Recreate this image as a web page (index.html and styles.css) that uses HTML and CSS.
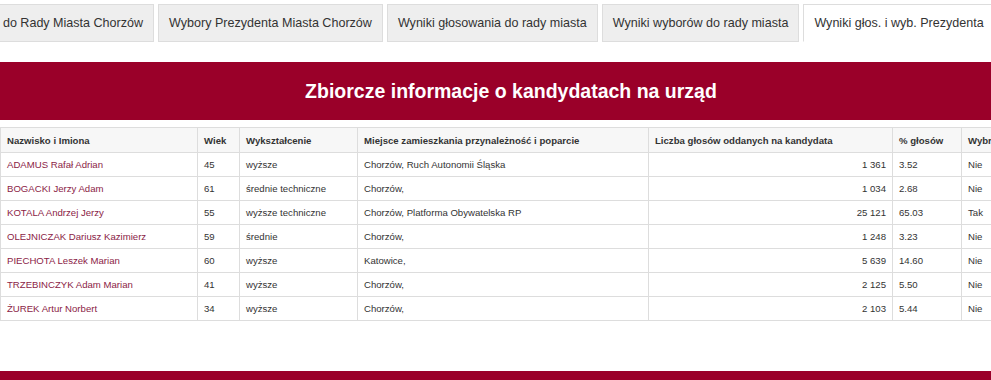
FILE: index.html
```html
<!DOCTYPE html>
<html lang="pl">
<head>
<meta charset="utf-8">
<title>Wyniki głos. i wyb. Prezydenta</title>
<link rel="stylesheet" href="styles.css">
</head>
<body>
<div class="page">
  <ul class="tabs">
    <li class="tab">Wybory do Rady Miasta Chorzów</li>
    <li class="tab">Wybory Prezydenta Miasta Chorzów</li>
    <li class="tab">Wyniki głosowania do rady miasta</li>
    <li class="tab">Wyniki wyborów do rady miasta</li>
    <li class="tab active">Wyniki głos. i wyb. Prezydenta</li>
  </ul>
  <div class="banner"><h2>Zbiorcze informacje o kandydatach na urząd</h2></div>
  <table class="results">
    <colgroup>
      <col class="c-name"><col class="c-age"><col class="c-edu"><col class="c-place"><col class="c-votes"><col class="c-pct"><col class="c-won">
    </colgroup>
    <thead>
      <tr>
        <th>Nazwisko i Imiona</th>
        <th>Wiek</th>
        <th>Wykształcenie</th>
        <th>Miejsce zamieszkania przynależność i poparcie</th>
        <th>Liczba głosów oddanych na kandydata</th>
        <th>% głosów</th>
        <th>Wybrany</th>
      </tr>
    </thead>
    <tbody>
      <tr><td class="name">ADAMUS Rafał Adrian</td><td>45</td><td>wyższe</td><td>Chorzów, Ruch Autonomii Śląska</td><td class="num">1 361</td><td>3.52</td><td>Nie</td></tr>
      <tr><td class="name">BOGACKI Jerzy Adam</td><td>61</td><td>średnie techniczne</td><td>Chorzów,</td><td class="num">1 034</td><td>2.68</td><td>Nie</td></tr>
      <tr><td class="name">KOTALA Andrzej Jerzy</td><td>55</td><td>wyższe techniczne</td><td>Chorzów, Platforma Obywatelska RP</td><td class="num">25 121</td><td>65.03</td><td>Tak</td></tr>
      <tr><td class="name">OLEJNICZAK Dariusz Kazimierz</td><td>59</td><td>średnie</td><td>Chorzów,</td><td class="num">1 248</td><td>3.23</td><td>Nie</td></tr>
      <tr><td class="name">PIECHOTA Leszek Marian</td><td>60</td><td>wyższe</td><td>Katowice,</td><td class="num">5 639</td><td>14.60</td><td>Nie</td></tr>
      <tr><td class="name">TRZEBINCZYK Adam Marian</td><td>41</td><td>wyższe</td><td>Chorzów,</td><td class="num">2 125</td><td>5.50</td><td>Nie</td></tr>
      <tr><td class="name">ŻUREK Artur Norbert</td><td>34</td><td>wyższe</td><td>Chorzów,</td><td class="num">2 103</td><td>5.44</td><td>Nie</td></tr>
    </tbody>
  </table>
  <div class="banner bottom"></div>
</div>
</body>
</html>
```
FILE: styles.css
```css
html, body {
  margin: 0;
  padding: 0;
  background: #fff;
  overflow: hidden;
}
.page {
  width: 1060px;
  padding-top: 4px;
  font-family: "Liberation Sans", Arial, sans-serif;
  color: #333;
}
.tabs {
  list-style: none;
  margin: 0 0 0 -54px;
  padding: 0;
  display: flex;
  gap: 4px;
  height: 38px;
}
.tab {
  box-sizing: border-box;
  height: 38px;
  padding: 0 10px;
  display: flex;
  align-items: center;
  background: #eee;
  border: 1px solid #ddd;
  font-size: 12.55px;
  color: #333;
  white-space: nowrap;
}
.tab.active {
  background: #fff;
  border-bottom-color: #fff;
}
.banner {
  margin-top: 20px;
  height: 58px;
  background: #9a0029;
  display: flex;
  align-items: center;
  justify-content: center;
  width: 1060px;
}
.banner h2 {
  margin: 0;
  padding-right: 38px;
  color: #fff;
  font-size: 19.5px;
  font-weight: bold;
}
.banner.bottom {
  margin-top: 50px;
  height: 40px;
}
.results {
  margin-top: 7px;
  border-collapse: collapse;
  table-layout: fixed;
  width: 1040px;
  font-size: 9.6px;
}
.c-name { width: 197px; }
.c-age { width: 42px; }
.c-edu { width: 118px; }
.c-place { width: 291px; }
.c-votes { width: 244px; }
.c-pct { width: 69px; }
.c-won { width: 79px; }
.results th, .results td {
  border: 1px solid #ddd;
  text-align: left;
  padding: 0 6px;
  height: 23px;
  white-space: nowrap;
  overflow: hidden;
}
.results th {
  background: #f7f7f7;
  font-weight: bold;
  color: #333;
  height: 24px;
}
.results td.name { color: #8b2346; }
.results td.num { text-align: right; }
```
